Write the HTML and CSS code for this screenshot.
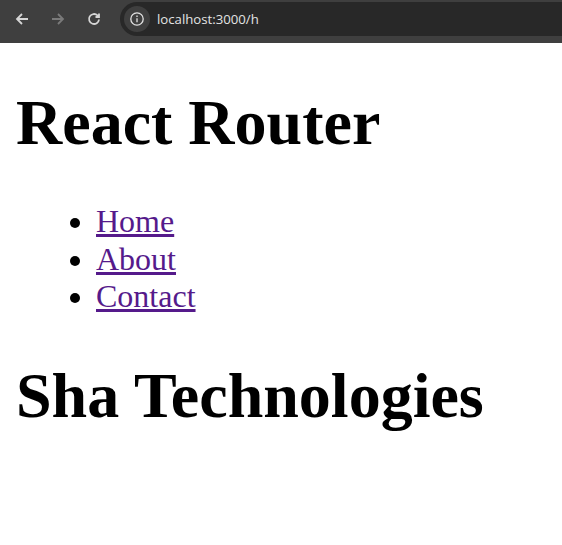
FILE: index.html
```html
<!DOCTYPE html>
<html lang="en">
<head>
  <meta charset="UTF-8">
  <title>React Router</title>
  <link rel="stylesheet" href="styles.css">
</head>
<body>
  <div class="toolbar">
    <svg class="nav-icon" width="16" height="16" viewBox="0 0 16 16"><path d="M14 8H3M8 3L3 8l5 5"/></svg>
    <svg class="nav-icon disabled" width="16" height="16" viewBox="0 0 16 16"><path d="M2 8h11M8 3l5 5-5 5"/></svg>
    <svg class="nav-icon" width="16" height="16" viewBox="0 0 16 16"><path d="M13 8.500A5 5 0 1 1 11.500 4.400L13 6M13 2.500V6H9.500"/></svg>
    <div class="omnibox">
      <span class="site-info">
        <svg width="16" height="16" viewBox="0 0 16 16"><circle cx="8" cy="8" r="6.200"/><path d="M8 7.300v4M8 4.600v1.400"/></svg>
      </span>
      <span class="url">localhost:3000/h</span>
    </div>
  </div>
  <div class="page">
    <h1>React Router</h1>
    <ul>
      <li><a href="#home">Home</a></li>
      <li><a href="#about">About</a></li>
      <li><a href="#contact">Contact</a></li>
    </ul>
    <h1>Sha Technologies</h1>
  </div>
</body>
</html>
```
FILE: styles.css
```css
body {
  margin: 0;
  background-color: #ffffff;
  color: #000000;
  font-family: "Liberation Serif", "Times New Roman", serif;
}

.toolbar {
  display: flex;
  align-items: center;
  height: 43px;
  padding: 0 0 5px 14px;
  box-sizing: border-box;
  background-color: #3f3f3f;
}

.nav-icon {
  margin-right: 20px;
  fill: none;
  stroke: #d6d6d6;
  stroke-width: 1.8;
}

.nav-icon.disabled {
  stroke: #7a7a7a;
}

.omnibox {
  flex: 1;
  display: flex;
  align-items: center;
  height: 34px;
  margin-left: -2px;
  padding-left: 4px;
  border-radius: 17px 0 0 17px;
  background-color: #282828;
}

.site-info {
  display: flex;
  align-items: center;
  justify-content: center;
  width: 26px;
  height: 26px;
  border-radius: 50%;
  background-color: #3f3f3f;
}

.site-info svg {
  fill: none;
  stroke: #e3e3e3;
  stroke-width: 1.3;
}

.url {
  margin-left: 7px;
  color: #e3e3e3;
  font-family: "Open Sans", sans-serif;
  font-size: 13.2px;
}

.page {
  padding: 0 16px;
}

h1 {
  margin: 43px 0;
  font-size: 64px;
  font-weight: bold;
}

ul {
  margin: 43px 0;
  padding-left: 80px;
  font-size: 32px;
  line-height: 37.500px;
}

a {
  color: #551a8b;
  text-decoration-thickness: 3px;
}
```
